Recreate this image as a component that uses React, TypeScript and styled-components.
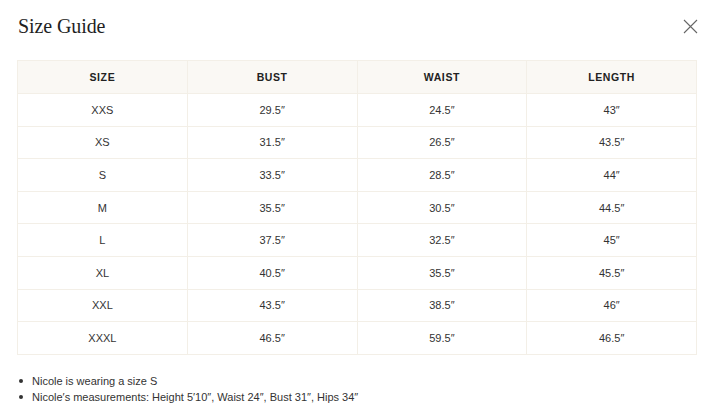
import React from "react";
import styled, { createGlobalStyle } from "styled-components";

const Global = createGlobalStyle`
  html, body { margin: 0; padding: 0; background: #ffffff; }
  body { font-family: "Liberation Sans", Arial, sans-serif; color: #2b2b2b; }
`;

const Page = styled.div`
  width: 711px;
  height: 417px;
  box-sizing: border-box;
  padding: 14px 14px 0 17px;
  display: flex;
  flex-direction: column;
`;

const Header = styled.div`
  display: flex;
  justify-content: space-between;
  align-items: flex-start;
  margin-bottom: 22px;
`;

const Title = styled.h2`
  margin: 0 0 0 1px;
  font-family: "Liberation Serif", "Times New Roman", serif;
  font-weight: 400;
  font-size: 20px;
  line-height: 24px;
  color: #1f1f1f;
  letter-spacing: -0.1px;
`;

const CloseButton = styled.button`
  border: 0;
  background: none;
  padding: 0;
  margin: 5px -1px 0 0;
  width: 15px;
  height: 15px;
  display: flex;
  align-items: center;
  justify-content: center;
  cursor: pointer;
`;

const Table = styled.table`
  width: 680px;
  border-collapse: collapse;
  border: 1px solid #f3efe7;
  table-layout: fixed;
`;

const HeadCell = styled.th`
  height: 32px;
  padding: 0;
  background: #faf8f4;
  font-size: 10.5px;
  font-weight: 700;
  letter-spacing: 0.6px;
  text-transform: uppercase;
  color: #222222;
  text-align: center;
  border: 1px solid #f3efe7;
`;

const Cell = styled.td`
  height: 31.6px;
  padding: 0;
  font-size: 11px;
  color: #333333;
  text-align: center;
  border: 1px solid #f3efe7;
`;

const Notes = styled.ul`
  list-style: none;
  margin: 18px 0 0 0;
  padding: 0;
`;

const Note = styled.li`
  display: flex;
  align-items: center;
  gap: 9px;
  padding-left: 2px;
  font-size: 11px;
  line-height: 16px;
  color: #333333;
`;

const Dot = styled.span`
  width: 4px;
  height: 4px;
  border-radius: 50%;
  background: #333333;
  flex: none;
`;

const rows: [string, string, string, string][] = [
  ["XXS", "29.5″", "24.5″", "43″"],
  ["XS", "31.5″", "26.5″", "43.5″"],
  ["S", "33.5″", "28.5″", "44″"],
  ["M", "35.5″", "30.5″", "44.5″"],
  ["L", "37.5″", "32.5″", "45″"],
  ["XL", "40.5″", "35.5″", "45.5″"],
  ["XXL", "43.5″", "38.5″", "46″"],
  ["XXXL", "46.5″", "59.5″", "46.5″"],
];

export default function App() {
  return (
    <>
      <Global />
      <Page>
        <Header>
          <Title>Size Guide</Title>
          <CloseButton aria-label="Close">
            <svg width="15" height="15" viewBox="0 0 15 15">
              <path d="M1 1 L14 14 M14 1 L1 14" stroke="#666" strokeWidth="1.1" fill="none" />
            </svg>
          </CloseButton>
        </Header>
        <Table>
          <thead>
            <tr>
              <HeadCell>Size</HeadCell>
              <HeadCell>Bust</HeadCell>
              <HeadCell>Waist</HeadCell>
              <HeadCell>Length</HeadCell>
            </tr>
          </thead>
          <tbody>
            {rows.map((r) => (
              <tr key={r[0]}>
                {r.map((c, i) => (
                  <Cell key={i}>{c}</Cell>
                ))}
              </tr>
            ))}
          </tbody>
        </Table>
        <Notes>
          <Note>
            <Dot />
            Nicole is wearing a size S
          </Note>
          <Note>
            <Dot />
            Nicole′s measurements: Height 5′10″, Waist 24″, Bust 31″, Hips 34″
          </Note>
        </Notes>
      </Page>
    </>
  );
}
